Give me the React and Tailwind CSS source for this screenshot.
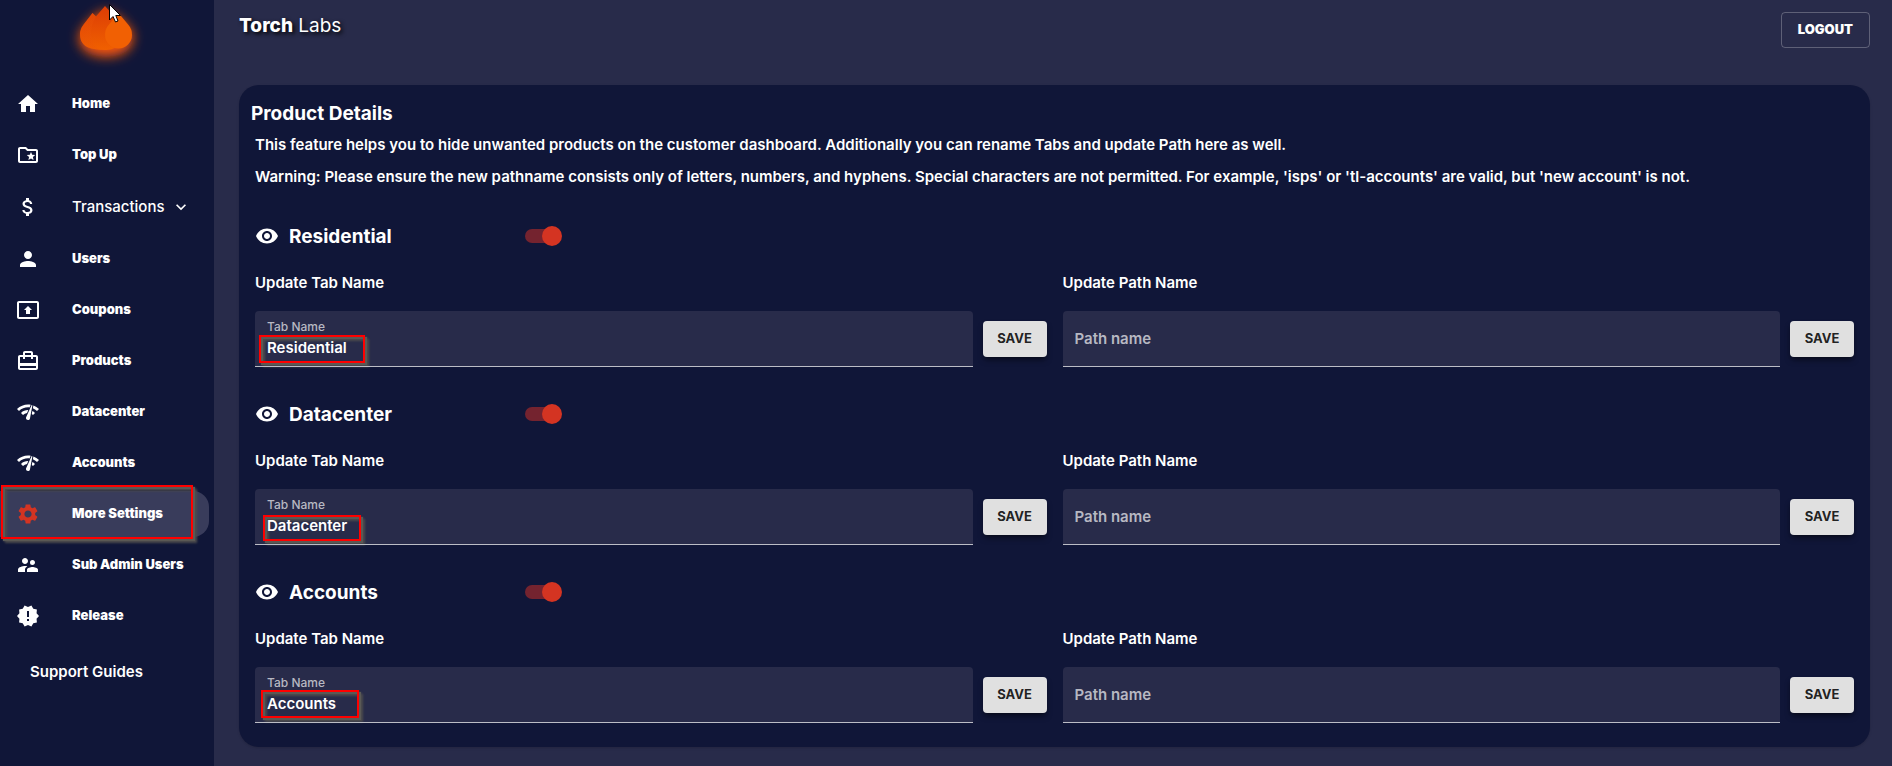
import { useState } from "react";
import {
  MdHome,
  MdOutlineFolderSpecial,
  MdAttachMoney,
  MdPerson,
  MdPresentToAll,
  MdCardTravel,
  MdNetworkCheck,
  MdSettings,
  MdSupervisorAccount,
  MdNewReleases,
  MdVisibility,
  MdExpandMore,
} from "react-icons/md";

const NAV = [
  { label: "Home", icon: MdHome },
  { label: "Top Up", icon: MdOutlineFolderSpecial },
  { label: "Transactions", icon: MdAttachMoney, expandable: true },
  { label: "Users", icon: MdPerson },
  { label: "Coupons", icon: MdPresentToAll },
  { label: "Products", icon: MdCardTravel },
  { label: "Datacenter", icon: MdNetworkCheck },
  { label: "Accounts", icon: MdNetworkCheck },
  { label: "More Settings", icon: MdSettings, active: true },
  { label: "Sub Admin Users", icon: MdSupervisorAccount },
  { label: "Release", icon: MdNewReleases },
];

const PRODUCTS = [
  { name: "Residential", mark: "left-1 top-6 h-7 w-[106px]" },
  { name: "Datacenter", mark: "left-2 top-[26px] h-[26px] w-[98px]" },
  { name: "Accounts", mark: "left-1.5 top-[23px] h-7 w-[98px]" },
];

function Highlight({ className }) {
  return (
    <span
      aria-hidden="true"
      className={`pointer-events-none absolute border-2 border-[#ff0000] [filter:drop-shadow(2px_2px_0_#5a5955)_drop-shadow(2px_2px_1px_#4c4b4c)] ${className}`}
    />
  );
}

function Logo() {
  return (
    <a href="#home" aria-label="Torch Labs" className="relative block h-[81px]">
      <svg viewBox="60 0 90 70" className="absolute left-[60px] top-0 h-[70px] w-[90px] overflow-visible">
        <defs>
          <linearGradient id="back" x1="0" y1="0" x2="0" y2="1">
            <stop offset="0" stopColor="#dc3c05" />
            <stop offset="1" stopColor="#f06000" />
          </linearGradient>
          <linearGradient id="side" x1="0" y1="0" x2="1" y2="1">
            <stop offset="0" stopColor="#e64d08" />
            <stop offset="1" stopColor="#ee5a04" />
          </linearGradient>
          <filter id="glow" x="-60%" y="-60%" width="220%" height="240%">
            <feGaussianBlur stdDeviation="6" />
          </filter>
        </defs>
        <path
          d="M93 17 L105 10 L119 17 L129 27 Q134 32 133 40 Q130 56 106 57 Q82 56 79 40 Q79 32 84 27Z"
          fill="#f4540c"
          filter="url(#glow)"
        />
        <path
          d="M92.500 13 L96 16.500 L105 6 L121 24 Q124 29 122 38 Q118 50 106 50 Q99 50 94 49 Q80 47 80 34 Q80 29 84 24Z"
          fill="url(#back)"
        />
        <path
          d="M92.500 13 L96 16.500 Q91 24 91 34 Q91 45 100 49.500 L94 49 Q80 47 80 34 Q80 29 84 24Z"
          fill="url(#side)"
          opacity=".4"
        />
        <path d="M118.500 13 L128.500 25 Q132 29 132 35 A13.500 13.500 0 0 1 105 35 Q105 29 108.500 25Z" fill="#f16003" />
      </svg>
      <svg viewBox="0 0 12 19" className="absolute left-[109px] top-1 h-[19px] w-3 overflow-visible" aria-hidden="true">
        <path d="M.5 .5 V16 L4 12.500 L6.500 18 L9 17 L6.800 11.500 H11.500Z" fill="#fff" stroke="#000" />
      </svg>
    </a>
  );
}

function NavItem({ item }) {
  const Icon = item.icon;
  const text = item.expandable ? "text-[15px] font-medium" : "pb-0.5 text-[13px] font-black";
  const row = `relative flex w-full items-center gap-8 pl-4 text-white ${
    item.expandable ? "h-12" : "h-[46px]"
  } ${item.active ? "rounded-r-2xl bg-[#393c5b]" : ""}`;
  const content = (
    <>
      <Icon className={`size-6 shrink-0 ${item.active ? "text-[#d43422]" : ""}`} />
      <span className={`whitespace-nowrap leading-6 ${text}`}>{item.label}</span>
      {item.expandable && <MdExpandMore className="-ml-[26px] size-5" />}
      {item.active && <Highlight className="-top-1.5 left-px h-[54px] w-48" />}
    </>
  );
  return (
    <li className="pr-[5px]">
      {item.expandable ? (
        <button type="button" aria-expanded="false" className={row}>
          {content}
        </button>
      ) : (
        <a href="#nav" aria-current={item.active ? "page" : undefined} className={row}>
          {content}
        </a>
      )}
    </li>
  );
}

function Sidebar() {
  return (
    <aside className="w-[214px] shrink-0 bg-[#101638]">
      <Logo />
      <nav>
        <ul className="flex flex-col gap-[5px]">
          {NAV.map((item) => (
            <NavItem key={item.label} item={item} />
          ))}
        </ul>
        <a href="#guides" className="mt-[21px] block pl-[30px] text-[15px] font-semibold leading-6">
          Support Guides
        </a>
      </nav>
    </aside>
  );
}

function SaveButton() {
  return (
    <button
      type="button"
      className="h-9 w-16 shrink-0 rounded bg-[#e0e0e0] text-[13px] font-bold text-black/87 shadow-md shadow-black/40"
    >
      SAVE
    </button>
  );
}

const INPUT =
  "block h-14 w-full rounded-t border-b border-[#bcbdc6] px-3 text-[15px] font-semibold text-white outline-none placeholder:text-[#b7b8c2] placeholder:opacity-100";

function ProductSection({ product }) {
  const [enabled, setEnabled] = useState(true);
  const [tab, setTab] = useState(product.name);
  const id = product.name.toLowerCase();
  return (
    <section>
      <div className="flex h-6 items-center">
        <MdVisibility className="size-6 shrink-0" />
        <h2 className="w-[236px] pl-2.5 pt-0.5 text-[19px] font-bold leading-6">{product.name}</h2>
        <input
          type="checkbox"
          role="switch"
          aria-label={`Show ${product.name}`}
          checked={enabled}
          onChange={(e) => setEnabled(e.target.checked)}
          className="relative ml-2.5 h-3.5 w-[34px] appearance-none rounded-full bg-[#74232f] before:absolute before:-top-[3px] before:left-0 before:size-5 before:rounded-full before:bg-gray-400 checked:before:left-[17px] checked:before:bg-[#d43422]"
        />
      </div>
      <div className="mt-[23px] grid grid-cols-2 gap-x-4">
        <div>
          <p className="text-[15px] font-semibold leading-6">Update Tab Name</p>
          <div className="mt-4 flex items-center gap-2.5">
            <div className="relative grow rounded-t bg-[#282b4a]">
              <label
                htmlFor={`${id}-tab`}
                className="absolute left-3 top-2 text-xs font-medium leading-4 text-[#b7b8c2]"
              >
                Tab Name
              </label>
              <Highlight className={product.mark} />
              <input
                id={`${id}-tab`}
                type="text"
                value={tab}
                onChange={(e) => setTab(e.target.value)}
                className={`${INPUT} relative bg-transparent pt-[18px]`}
              />
            </div>
            <SaveButton />
          </div>
        </div>
        <div>
          <p className="text-[15px] font-semibold leading-6">Update Path Name</p>
          <div className="mt-4 flex items-center gap-2.5">
            <input
              type="text"
              aria-label="Path name"
              placeholder="Path name"
              className={`${INPUT} min-w-0 grow bg-[#282b4a]`}
            />
            <SaveButton />
          </div>
        </div>
      </div>
    </section>
  );
}

export default function App() {
  return (
    <div className="flex min-h-screen bg-[#282b4a] font-['Inter',sans-serif] text-white">
      <Sidebar />
      <main className="min-w-0 grow pb-4 pl-[25px] pr-[22px]">
        <header className="flex h-[85px] items-start justify-between pt-3">
          <p className="text-[19px] leading-7 [text-shadow:2px_2px_4px_#000]">
            <b className="font-extrabold">Torch</b> <span className="font-normal">Labs</span>
          </p>
          <button
            type="button"
            className="h-9 rounded border border-white/25 px-4 text-[13px] font-black"
          >
            LOGOUT
          </button>
        </header>
        <div className="rounded-[20px] bg-[#101638] pb-6 pl-4 pr-4 pt-[17px] shadow-sm">
          <h1 className="-ml-1 text-[19px] font-bold leading-6">Product Details</h1>
          <div className="mt-[3px] text-[15px] font-semibold leading-8">
            <p>
              This feature helps you to hide unwanted products on the customer dashboard. Additionally you can rename
              Tabs and update Path here as well.
            </p>
            <p>
              Warning: Please ensure the new pathname consists only of letters, numbers, and hyphens. Special characters
              are not permitted. For example, 'isps' or 'tl-accounts' are valid, but 'new account' is not.
            </p>
          </div>
          <div className="mt-[31px] flex flex-col gap-[35px]">
            {PRODUCTS.map((product) => (
              <ProductSection key={product.name} product={product} />
            ))}
          </div>
        </div>
      </main>
    </div>
  );
}
